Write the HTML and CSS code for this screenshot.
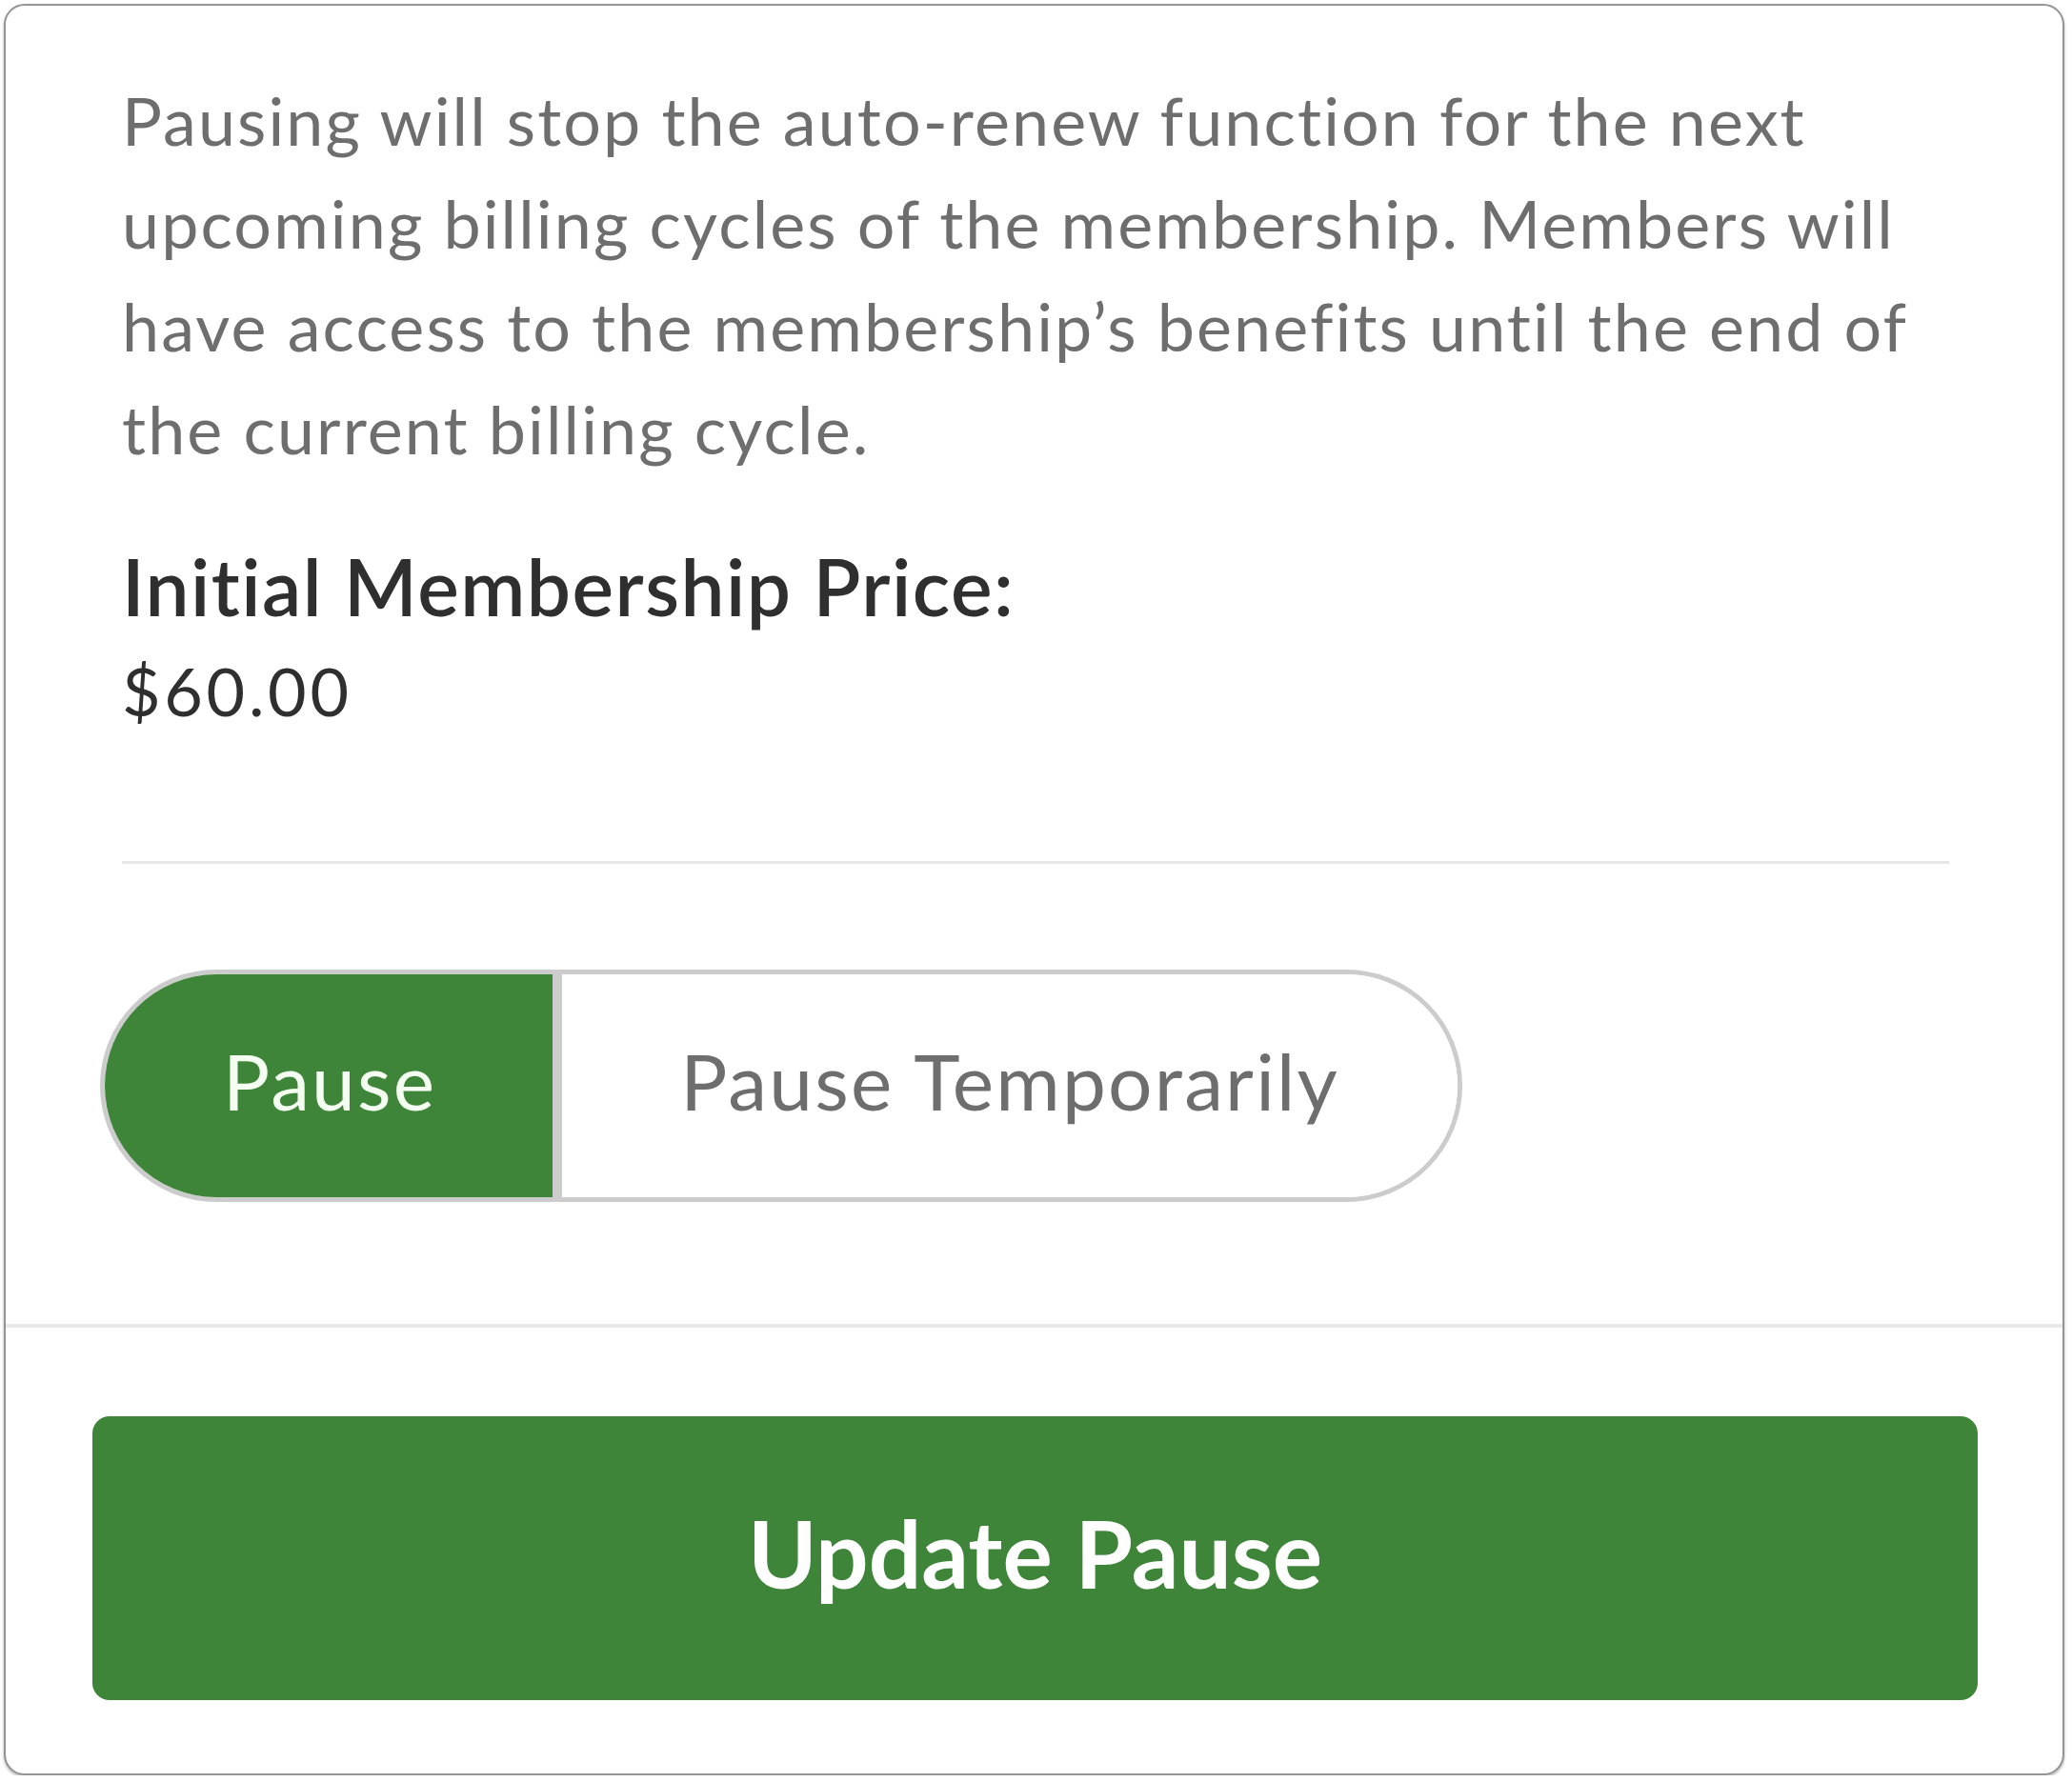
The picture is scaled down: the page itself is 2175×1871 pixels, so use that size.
FILE: index.html
```html
<!DOCTYPE html>
<html lang="en">
<head>
<meta charset="utf-8">
<title>Update Pause</title>
<link rel="stylesheet" href="styles.css">
</head>
<body>
<div class="card">
  <div class="card-body">
    <p class="desc">Pausing will stop the auto-renew function for the next upcoming billing cycles of the membership. Members will have access to the membership’s benefits until the end of the current billing cycle.</p>
    <div class="price">
      <h3 class="price-label">Initial Membership Price:</h3>
      <div class="price-value">$60.00</div>
    </div>
    <hr class="divider">
    <div class="toggle">
      <button class="seg seg-active" type="button">Pause</button>
      <button class="seg" type="button">Pause Temporarily</button>
    </div>
  </div>
  <div class="card-footer">
    <button class="primary" type="button">Update Pause</button>
  </div>
</div>
</body>
</html>
```
FILE: styles.css
```css
* { box-sizing: border-box; }
html, body { margin: 0; padding: 0; background: #ffffff; }
body {
  font-family: Lato, "Open Sans", Arial, sans-serif;
  font-variant-ligatures: none;
}

.card {
  width: 2163px;
  margin: 4px 0 0 4px;
  border: 2px solid #959595;
  border-radius: 22px;
  box-shadow: 0 2px 3px rgba(0,0,0,0.3);
  background: #ffffff;
  overflow: hidden;
}

.card-body {
  padding: 66px 119px 128px 122px;
}

.desc {
  margin: 0;
  font-size: 70px;
  line-height: 108px;
  letter-spacing: 2.1px;
  color: #6e6e6e;
}

.price { margin-top: 61px; }
.price-label {
  margin: 0;
  font-size: 82px;
  line-height: 100px;
  font-weight: 600;
  letter-spacing: 1.5px;
  color: #2f2f2f;
}
.price-value {
  margin-top: 10px;
  font-size: 70px;
  line-height: 100px;
  letter-spacing: 3.7px;
  color: #2f2f2f;
}

.divider {
  margin: 129px 0 0 0;
  border: 0;
  border-top: 3px solid #e6e6e6;
  height: 0;
}

.toggle {
  display: inline-flex;
  margin: 111px 0 0 -23px;
  height: 244px;
  border: 5px solid #cccccc;
  border-radius: 122px;
  overflow: hidden;
}

.seg {
  font-family: inherit;
  font-variant-ligatures: none;
  font-size: 82px;
  line-height: 222px;
  letter-spacing: 2.2px;
  padding: 0 124px 12px;
  border: 0;
  background: #ffffff;
  color: #6e6e6e;
  cursor: pointer;
}
.seg + .seg { border-left: 10px solid #cccccc; }
.seg-active {
  background: #3e8439;
  color: #f4fff2;
  padding: 0 122px 12px 124px;
}

.card-footer {
  border-top: 4px solid #e8e8e8;
  padding: 93px 89px 77px 91px;
}

.primary {
  display: block;
  width: 100%;
  height: 298px;
  border: 0;
  border-radius: 18px;
  background: #3e8439;
  color: #ffffff;
  font-family: inherit;
  font-size: 98px;
  font-weight: 700;
  line-height: 286px;
  padding: 0 0 12px;
  cursor: pointer;
}
```
